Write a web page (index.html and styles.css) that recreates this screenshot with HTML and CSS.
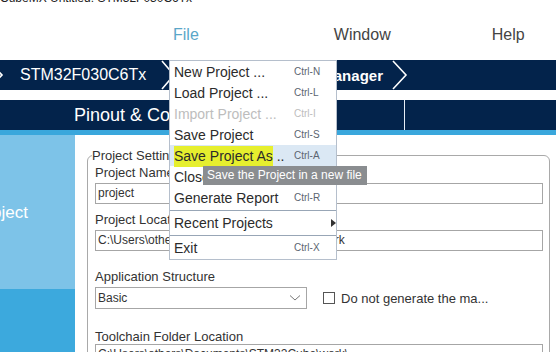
FILE: index.html
```html
<!DOCTYPE html>
<html lang="en">
<head>
    <meta charset="UTF-8">
    <title>STM32CubeMX - Project Manager</title>
    <link rel="stylesheet" href="styles.css">
</head>
<body>
    <div class="title-bar"><span>CubeMX Untitled: STM32F030C6Tx</span></div>

    <div class="menubar">
        <span class="menu-item active">File</span>
        <span class="menu-item">Window</span>
        <span class="menu-item">Help</span>
    </div>

    <div class="crumbs">
        <svg class="chev small" width="6" height="30" viewBox="0 0 6 30"><polyline points="-2,11 2,15 -2,19" /></svg>
        <span class="crumb">STM32F030C6Tx</span>
        <svg class="chev" width="16" height="30" viewBox="0 0 16 30"><polyline points="2,1 14,15 2,29" /></svg>
        <span class="crumb bold">Project Manager</span>
        <svg class="chev" width="18" height="30" viewBox="0 0 18 30"><polyline points="2,1 15,15 2,29" /></svg>
    </div>

    <div class="tabs">
        <span class="tab">Pinout &amp; Configuration</span>
        <span class="tab-sep"></span>
    </div>
    <div class="strip"></div>

    <div class="main">
        <div class="sidebar">
            <div class="side-top"><span class="side-label">Project</span></div>
            <div class="side-bottom"></div>
        </div>
        <div class="content">
            <fieldset class="settings">
                <legend>Project Settings</legend>
                <label class="field-label">Project Name</label>
                <div class="input">project</div>
                <label class="field-label">Project Location</label>
                <div class="input">C:\Users\others\Documents\STM32Cube\work</div>
                <label class="field-label gap">Application Structure</label>
                <div class="row">
                    <div class="select">Basic
                        <svg width="12" height="8" viewBox="0 0 12 8"><polyline points="1,1.5 6,6 11,1.5" /></svg>
                    </div>
                    <span class="check"></span>
                    <span class="check-label">Do not generate the ma...</span>
                </div>
                <label class="field-label gap2">Toolchain Folder Location</label>
                <div class="input">C:\Users\others\Documents\STM32Cube\work\</div>
            </fieldset>
        </div>
    </div>

    <div class="dropdown">
        <div class="dd-item"><span class="dd-name">New Project ...</span><span class="dd-key">Ctrl-N</span></div>
        <div class="dd-item"><span class="dd-name">Load Project ...</span><span class="dd-key">Ctrl-L</span></div>
        <div class="dd-item disabled"><span class="dd-name">Import Project ...</span><span class="dd-key">Ctrl-I</span></div>
        <div class="dd-item"><span class="dd-name">Save Project</span><span class="dd-key">Ctrl-S</span></div>
        <div class="dd-item hover"><span class="dd-name"><mark>Save Project As</mark> ..</span><span class="dd-key">Ctrl-A</span></div>
        <div class="dd-item"><span class="dd-name">Close Project</span><span class="dd-key"></span></div>
        <div class="dd-item"><span class="dd-name">Generate Report</span><span class="dd-key">Ctrl-R</span></div>
        <div class="dd-sep"></div>
        <div class="dd-item"><span class="dd-name">Recent Projects</span><span class="dd-arrow"></span></div>
        <div class="dd-sep"></div>
        <div class="dd-item"><span class="dd-name">Exit</span><span class="dd-key">Ctrl-X</span></div>
    </div>

    <div class="tooltip">Save the Project in a new file</div>
</body>
</html>
```

FILE: styles.css
```css
html, body {
    margin: 0;
    font-family: "Liberation Sans", Arial, sans-serif;
    background: #fff;
    color: #333;
}

body {
    position: relative;
    width: 556px;
    height: 352px;
    overflow: hidden;
}

.title-bar {
    height: 5px;
    overflow: hidden;
    position: relative;
}
.title-bar span {
    display: block;
    margin-top: -9px;
    font-size: 12px;
    color: #222;
    white-space: nowrap;
}

.menubar {
    height: 55px;
    display: flex;
    align-items: center;
    font-size: 16px;
    color: #444;
}
.menu-item {
    position: relative;
    top: 2px;
}
.menu-item:nth-child(1) { margin-left: 173px; }
.menu-item:nth-child(2) { margin-left: 135px; }
.menu-item:nth-child(3) { margin-left: 101px; }
.menu-item.active {
    color: #5aa6c8;
}

.crumbs {
    height: 30px;
    background: #03234b;
    display: flex;
    align-items: center;
    color: #fff;
}
.chev polyline {
    fill: none;
    stroke: #fff;
    stroke-width: 1.6;
}
.crumb {
    font-size: 16px;
    margin-left: 14px;
    margin-right: 14px;
}
.crumb.bold {
    font-weight: bold;
    margin-left: 90px;
    margin-right: 8px;
    font-size: 15px;
}

.tabs {
    margin-top: 10px;
    height: 30px;
    background: #03234b;
    display: flex;
    align-items: center;
    color: #fff;
}
.tab {
    font-size: 18px;
    margin-left: 74px;
    white-space: nowrap;
    width: 330px;
}
.tab-sep {
    width: 1px;
    height: 30px;
    background: #e6eef6;
}
.strip {
    height: 5px;
    background: #3aa7dc;
}

.main {
    display: flex;
    height: 217px;
}
.sidebar {
    width: 75px;
    display: flex;
    flex-direction: column;
}
.side-top {
    height: 154px;
    background: #7dc3e8;
    display: flex;
    align-items: center;
    overflow: hidden;
}
.side-label {
    color: #fff;
    font-size: 17px;
    margin-left: -25px;
    position: relative;
    top: 1px;
}
.side-bottom {
    flex: 1;
    background: #3ca9dd;
}

.content {
    flex: 1;
    padding: 13px 6px 0 12px;
}
.settings {
    margin: 0;
    border: 1px solid #a9a9a9;
    border-radius: 6px;
    padding: 0 6px 0 7px;
    height: 260px;
}
.settings legend {
    font-size: 13px;
    color: #333;
    padding: 0;
    margin-left: -3px;
}
.field-label {
    display: block;
    font-size: 13px;
    color: #333;
    margin: 2px 0 3px;
}
.field-label.gap { margin-top: 18px; }
.field-label.gap2 { margin-top: 20px; margin-bottom: 0; }
.input {
    height: 19px;
    border: 1px solid #a6a6a6;
    font-size: 12px;
    line-height: 19px;
    padding-left: 2px;
    color: #333;
    white-space: nowrap;
    overflow: hidden;
    margin-bottom: 8px;
}
.row {
    display: flex;
    align-items: center;
}
.select {
    width: 208px;
    height: 20px;
    border: 1px solid #a6a6a6;
    font-size: 12px;
    line-height: 20px;
    padding-left: 2px;
    display: flex;
    justify-content: space-between;
    align-items: center;
}
.select svg {
    margin-right: 5px;
}
.select polyline {
    fill: none;
    stroke: #777;
    stroke-width: 1;
}
.check {
    width: 10px;
    height: 10px;
    border: 1px solid #555;
    margin-left: 16px;
}
.check-label {
    font-size: 13px;
    margin-left: 6px;
    color: #333;
}

.dropdown {
    position: absolute;
    left: 169px;
    top: 60px;
    width: 166px;
    background: #fff;
    border: 1px solid #b5bfcc;
    padding-bottom: 1px;
}
.dd-item {
    display: flex;
    align-items: center;
    height: 21px;
    font-size: 14px;
    color: #2b2b2b;
}
.dd-name {
    width: 120px;
    padding-left: 4px;
    white-space: nowrap;
}
.dd-key {
    font-size: 10px;
    color: #5b6570;
}
.dd-item.disabled .dd-name,
.dd-item.disabled .dd-key {
    color: #bdbdbd;
}
.dd-item.hover {
    background: #dbe8f4;
}
.dd-item mark {
    background: #e6ef2e;
    color: #2b2b2b;
    padding: 2px 0 3px;
}
.dd-sep {
    height: 1px;
    background: #98a6b6;
    margin: 2px 0 1px;
}
.dd-arrow {
    width: 0;
    height: 0;
    border-top: 4px solid transparent;
    border-bottom: 4px solid transparent;
    border-left: 5px solid #333;
    margin-left: 40px;
}

.tooltip {
    position: absolute;
    left: 203px;
    top: 166px;
    background: #8a8d90;
    color: #fff;
    font-size: 12px;
    padding: 2px 5px 3px 4px;
    white-space: nowrap;
}
```
